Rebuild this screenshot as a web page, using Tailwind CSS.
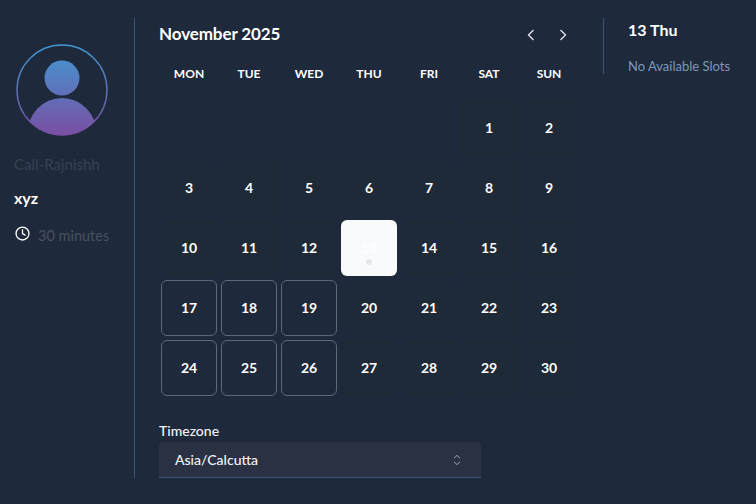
<!DOCTYPE html>
<html lang="en">
<head>
    <meta charset="UTF-8">
    <title>Booking calendar</title>
    <script src="https://cdn.jsdelivr.net/npm/@tailwindcss/browser@4"></script>
</head>
<body class="bg-[#1e293b] text-white font-['Lato','Noto_Sans',sans-serif] w-[756px] h-[504px] overflow-hidden">
    <div class="flex h-[504px] pt-[18px]">
        <!-- profile -->
        <aside class="w-[135px] h-[460px] border-r border-[#3d5080] pl-[14px] pt-[26px]">
            <svg class="w-[92px] h-[92px] ml-[2px]" viewBox="0 0 92 92">
                <defs>
                    <linearGradient id="ring" x1="0" y1="0" x2="0" y2="1">
                        <stop offset="0" stop-color="#3f95d0"/>
                        <stop offset="1" stop-color="#7b4ea3"/>
                    </linearGradient>
                    <linearGradient id="person" gradientUnits="userSpaceOnUse" x1="0" y1="16" x2="0" y2="92">
                        <stop offset="0" stop-color="#4a8dcb"/>
                        <stop offset="1" stop-color="#7a4ea3"/>
                    </linearGradient>
                    <clipPath id="round"><circle cx="46" cy="46" r="45"/></clipPath>
                </defs>
                <circle cx="46" cy="46" r="45" fill="none" stroke="url(#ring)" stroke-width="1.4"/>
                <g clip-path="url(#round)" fill="url(#person)">
                    <circle cx="46" cy="34" r="17.5"/>
                    <ellipse cx="46" cy="91" rx="35" ry="37"/>
                </g>
            </svg>
            <p class="mt-[18px] text-[15px] leading-5 text-[#374252]">Call-Rajnishh</p>
            <p class="mt-[14px] text-[16px] leading-5 font-bold">xyz</p>
            <div class="mt-[18px] flex items-center gap-[8px] text-[14.5px] leading-5 text-[#465162]">
                <svg class="w-[15px] h-[15px] -mt-[6px] ml-[1px]" viewBox="0 0 16 16" fill="none" stroke="#fff" stroke-width="1.4" stroke-linecap="round" stroke-linejoin="round">
                    <circle cx="8" cy="8" r="6.9"/>
                    <path d="M8 4v4.2l2.8 1.5"/>
                </svg>
                <span>30 minutes</span>
            </div>
        </aside>

        <!-- calendar -->
        <main class="w-[468px] pl-[24px]">
            <div class="flex items-center justify-between h-[32px] w-[420px]">
                <h1 class="text-[17px] tracking-[-0.1px] font-bold leading-6">November 2025</h1>
                <div class="flex items-center gap-[22px] pr-[11px] mt-[1px]">
                    <svg class="w-[10px] h-[12px]" viewBox="0 0 10 12" fill="none" stroke="#e5e7eb" stroke-width="1.3"><path d="M7.5 1 2.5 6l5 5"/></svg>
                    <svg class="w-[10px] h-[12px]" viewBox="0 0 10 12" fill="none" stroke="#e5e7eb" stroke-width="1.3"><path d="M2.5 1l5 5-5 5"/></svg>
                </div>
            </div>
            <div class="grid grid-cols-[repeat(7,60px)] mt-[15px] h-[35px] text-xs font-bold text-center leading-[18px]">
                <span>MON</span><span>TUE</span><span>WED</span><span>THU</span><span>FRI</span><span>SAT</span><span>SUN</span>
            </div>
            <div class="grid grid-cols-[repeat(7,56px)] gap-1 ml-[2px] text-sm font-bold">
                <div class="col-start-6 h-14 flex items-center justify-center rounded-md bg-[#1f2a38]">1</div>
                <div class="h-14 flex items-center justify-center rounded-md bg-[#1f2a38]">2</div>
                <div class="h-14 flex items-center justify-center rounded-md bg-[#1f2a38]">3</div>
                <div class="h-14 flex items-center justify-center rounded-md bg-[#1f2a38]">4</div>
                <div class="h-14 flex items-center justify-center rounded-md bg-[#1f2a38]">5</div>
                <div class="h-14 flex items-center justify-center rounded-md bg-[#1f2a38]">6</div>
                <div class="h-14 flex items-center justify-center rounded-md bg-[#1f2a38]">7</div>
                <div class="h-14 flex items-center justify-center rounded-md bg-[#1f2a38]">8</div>
                <div class="h-14 flex items-center justify-center rounded-md bg-[#1f2a38]">9</div>
                <div class="h-14 flex items-center justify-center rounded-md bg-[#1f2a38]">10</div>
                <div class="h-14 flex items-center justify-center rounded-md bg-[#1f2a38]">11</div>
                <div class="h-14 flex items-center justify-center rounded-md bg-[#1f2a38]">12</div>
                <div class="relative h-14 flex items-center justify-center rounded-md bg-[#f9fafb] text-white">
                    13
                    <span class="absolute left-[25px] top-[39px] w-[6px] h-[6px] rounded-full bg-[#e5e7eb]"></span>
                </div>
                <div class="h-14 flex items-center justify-center rounded-md bg-[#1f2a38]">14</div>
                <div class="h-14 flex items-center justify-center rounded-md bg-[#1f2a38]">15</div>
                <div class="h-14 flex items-center justify-center rounded-md bg-[#1f2a38]">16</div>
                <div class="h-14 flex items-center justify-center rounded-md border border-[#5d6878]">17</div>
                <div class="h-14 flex items-center justify-center rounded-md border border-[#5d6878]">18</div>
                <div class="h-14 flex items-center justify-center rounded-md border border-[#5d6878]">19</div>
                <div class="h-14 flex items-center justify-center rounded-md bg-[#1f2a38]">20</div>
                <div class="h-14 flex items-center justify-center rounded-md bg-[#1f2a38]">21</div>
                <div class="h-14 flex items-center justify-center rounded-md bg-[#1f2a38]">22</div>
                <div class="h-14 flex items-center justify-center rounded-md bg-[#1f2a38]">23</div>
                <div class="h-14 flex items-center justify-center rounded-md border border-[#5d6878]">24</div>
                <div class="h-14 flex items-center justify-center rounded-md border border-[#5d6878]">25</div>
                <div class="h-14 flex items-center justify-center rounded-md border border-[#5d6878]">26</div>
                <div class="h-14 flex items-center justify-center rounded-md bg-[#1f2a38]">27</div>
                <div class="h-14 flex items-center justify-center rounded-md bg-[#1f2a38]">28</div>
                <div class="h-14 flex items-center justify-center rounded-md bg-[#1f2a38]">29</div>
                <div class="h-14 flex items-center justify-center rounded-md bg-[#1f2a38]">30</div>
            </div>
            <label class="block mt-[25px] text-sm leading-5 font-medium text-[#f1f5f9]">Timezone</label>
            <div class="mt-[1px] w-[322px] h-[36px] flex items-center justify-between pl-4 pr-[20px] rounded-t bg-[#2a3142] border-b border-[#3d5080] text-sm font-medium text-[#f1f5f9]">
                <span>Asia/Calcutta</span>
                <svg class="w-[8px] h-[12px]" viewBox="0 0 8 12" fill="none" stroke="#9ca3af" stroke-width="1"><path d="M1 4.2 4 1.4l3 2.8M1 7.8l3 2.8 3-2.8"/></svg>
            </div>
        </main>

        <!-- slots -->
        <section class="h-[56px] border-l border-[#3d5080] pl-[24px]">
            <p class="text-base leading-6 font-bold">13 Thu</p>
            <p class="mt-[14px] text-[13px] leading-5 text-[#7f97b8]">No Available Slots</p>
        </section>
    </div>
</body>
</html>
